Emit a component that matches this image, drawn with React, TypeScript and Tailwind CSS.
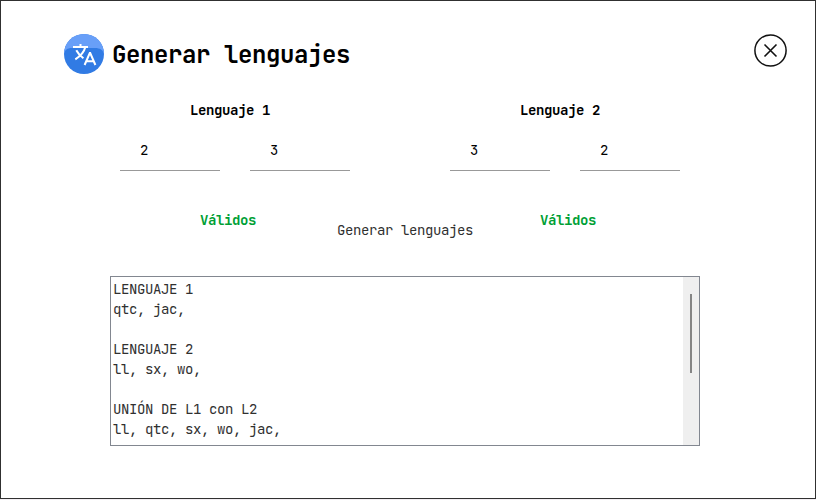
const MONO = "font-['JetBrains_Mono','DejaVu_Sans_Mono',monospace]";

const OUTPUT = `LENGUAJE 1
qtc, jac,

LENGUAJE 2
ll, sx, wo,

UNIÓN DE L1 con L2
ll, qtc, sx, wo, jac,`;

function TranslateLogo() {
  return (
    <svg width="40" height="40" viewBox="0 0 40 40" className="shrink-0">
      <defs>
        <clipPath id="disc">
          <circle cx="20" cy="20" r="20" />
        </clipPath>
      </defs>
      <g clipPath="url(#disc)">
        <rect width="40" height="40" fill="#317be4" />
        <path d="M0 0H40V20C39 16 36 14 31 14H8C3 14 1 16 0 20Z" fill="#689ff8" />
      </g>
      <g fill="none" stroke="#fff" strokeWidth="2">
        <path d="M9 13H24M16.5 10V13" />
        <path d="M21.3 13C20.2 18 16.5 22 11.3 25.3M12.3 16.2C14 19.5 16.5 22 19.4 24.2" />
        <path d="M20.6 31L25.8 19H26.2L31.4 31M22.4 27.2H29.6" />
      </g>
    </svg>
  );
}

function Field({ value }: { value: string }) {
  return (
    <div className="h-[41px] w-[100px] border-b border-[#999] pl-5 leading-10">{value}</div>
  );
}

function Language({ title, values }: { title: string; values: string[] }) {
  return (
    <section className="w-[230px]">
      <h2 className="pl-[70px] font-bold leading-5">{title}</h2>
      <div className="mt-2.5 flex gap-[30px]">
        {values.map((value, i) => (
          <Field key={i} value={value} />
        ))}
      </div>
    </section>
  );
}

export default function App() {
  return (
    <div className="h-[500px] w-[816px] bg-[#f3eff3]">
      <main
        className={`h-[499px] border border-[#303030] bg-white text-[14px] tracking-[-0.4px] text-black ${MONO}`}
      >
        <header className="flex h-[99px] items-start pl-[63px] pr-7 pt-[33px]">
          <TranslateLogo />
          <h1 className="ml-2 mt-px whitespace-nowrap text-[24px] font-bold leading-10 tracking-[-0.4px]">
            Generar lenguajes
          </h1>
          <svg width="33" height="33" viewBox="0 0 33 33" fill="none" stroke="#111" className="ml-auto">
            <circle cx="16.5" cy="16.5" r="15.6" strokeWidth="1.5" />
            <path d="M10.5 10.5L22.5 22.5M22.5 10.5L10.5 22.5" strokeWidth="1.6" />
          </svg>
        </header>

        <div className="flex gap-[100px] pl-[119px]">
          <Language title="Lenguaje 1" values={["2", "3"]} />
          <Language title="Lenguaje 2" values={["3", "2"]} />
        </div>

        <div className="mt-[39px] flex h-[66px] items-start pl-[199px] leading-5">
          <span className="w-[137px] font-bold text-[#009f35]">Válidos</span>
          <button className="mt-2.5 w-[203px] text-left leading-5 text-[#303030]">
            Generar lenguajes
          </button>
          <span className="font-bold text-[#009f35]">Válidos</span>
        </div>

        <div className="ml-[109px] flex h-[170px] w-[590px] justify-between overflow-hidden border border-[#828790]">
          <pre className={`pl-0.5 pt-0.5 leading-5 text-[#303030] ${MONO}`}>{OUTPUT}</pre>
          <div className="w-4 bg-[#efefef] pl-[7px] pt-[17px]">
            <div className="h-[79px] w-0.5 bg-[#858585]" />
          </div>
        </div>
      </main>
    </div>
  );
}
